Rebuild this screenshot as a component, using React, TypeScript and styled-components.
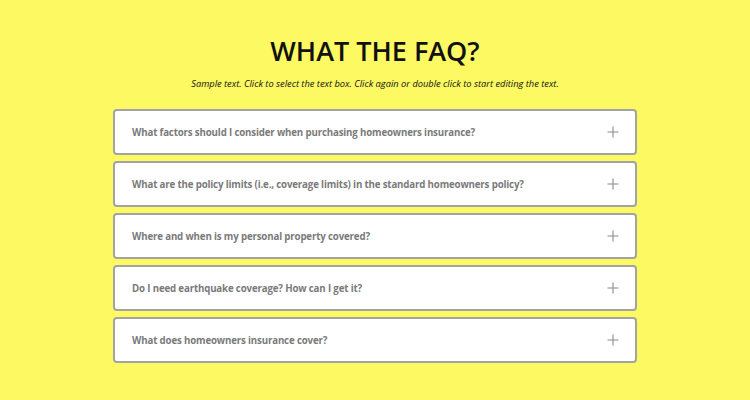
import { createGlobalStyle } from 'styled-components';
import styled from 'styled-components';

const GlobalStyle = createGlobalStyle`
  html, body {
    margin: 0;
    padding: 0;
    background: #fcf962;
  }
  body {
    font-family: 'Open Sans', 'Liberation Sans', sans-serif;
  }
`;

const Page = styled.div`
  width: 750px;
  height: 400px;
  background: #fcf962;
  display: flex;
  flex-direction: column;
  align-items: center;
  padding-top: 33px;
  box-sizing: border-box;
`;

const Title = styled.h1`
  margin: 0;
  font-size: 27px;
  font-weight: 600;
  color: #111;
  line-height: 36px;
`;

const Subtitle = styled.p`
  margin: 8px 0 0;
  font-size: 9.3px;
  font-style: italic;
  color: #111;
  line-height: 14px;
`;

const List = styled.div`
  margin-top: 18px;
  width: 524px;
  display: flex;
  flex-direction: column;
  gap: 6px;
`;

const Item = styled.div`
  height: 46px;
  box-sizing: border-box;
  background: #fff;
  border: 2px solid #a3a3a3;
  border-radius: 4px;
  display: flex;
  align-items: center;
  justify-content: space-between;
  padding: 0 16px 0 17px;
`;

const Question = styled.span`
  font-size: 9.7px;
  font-weight: 700;
  color: #7a7a7a;
  letter-spacing: -0.15px;
`;

const Plus = () => (
  <svg width="12" height="12" viewBox="0 0 12 12">
    <path d="M6 0.5v11M0.5 6h11" stroke="#8a8a8a" strokeWidth="1.1" />
  </svg>
);

const questions = [
  'What factors should I consider when purchasing homeowners insurance?',
  'What are the policy limits (i.e., coverage limits) in the standard homeowners policy?',
  'Where and when is my personal property covered?',
  'Do I need earthquake coverage? How can I get it?',
  'What does homeowners insurance cover?',
];

export default function App() {
  return (
    <>
      <GlobalStyle />
      <Page>
        <Title>WHAT THE FAQ?</Title>
        <Subtitle>
          Sample text. Click to select the text box. Click again or double click to start editing the text.
        </Subtitle>
        <List>
          {questions.map((q) => (
            <Item key={q}>
              <Question>{q}</Question>
              <Plus />
            </Item>
          ))}
        </List>
      </Page>
    </>
  );
}
